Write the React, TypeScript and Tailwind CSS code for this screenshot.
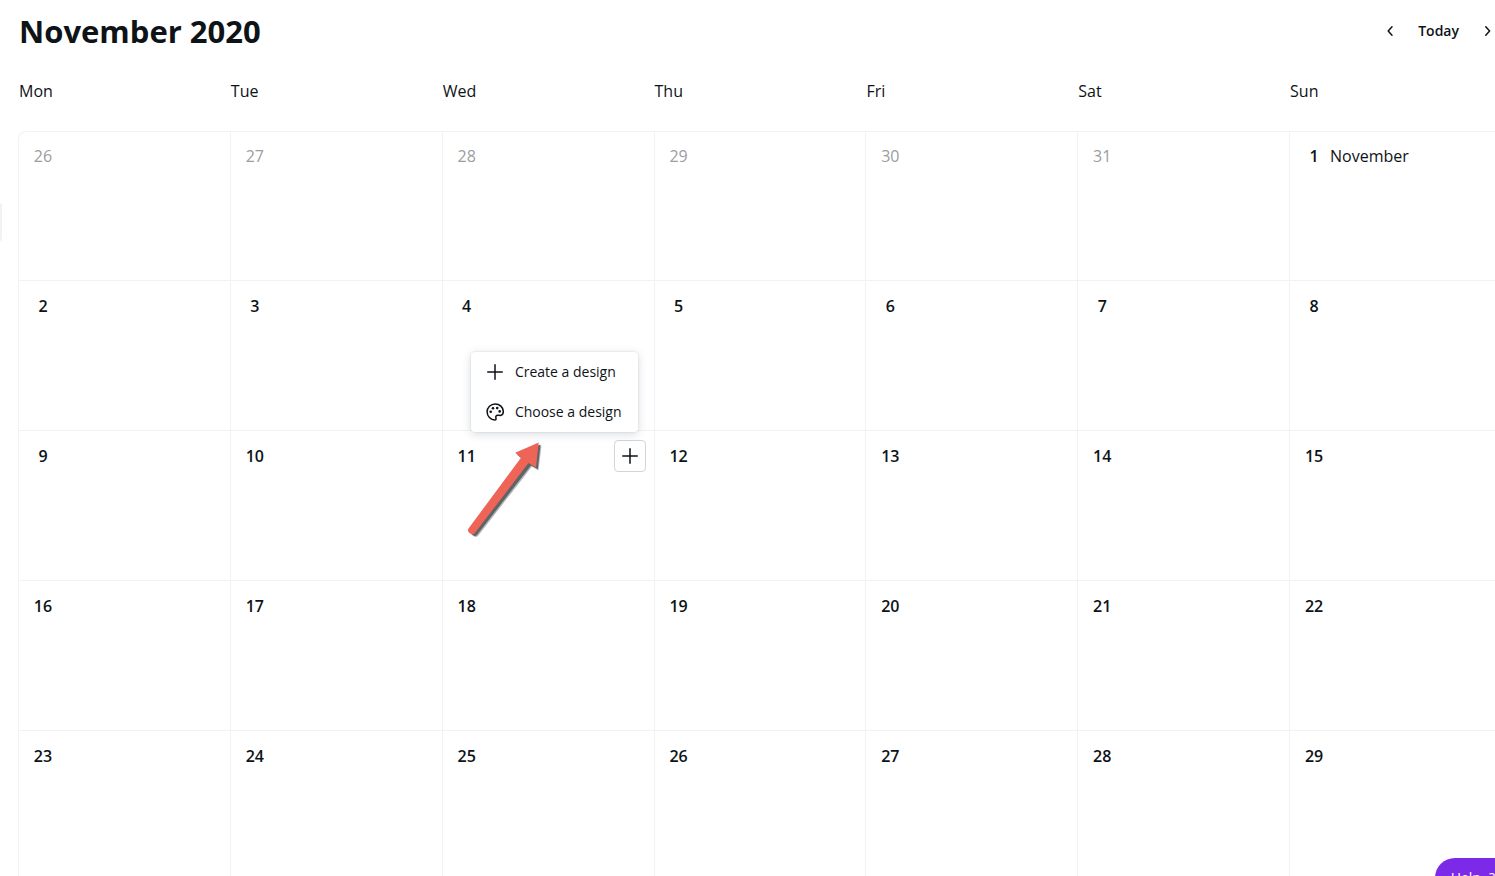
import type { ReactNode } from 'react';

type Day = { day: number; muted?: boolean; month?: string };

const WEEKDAYS = ['Mon', 'Tue', 'Wed', 'Thu', 'Fri', 'Sat', 'Sun'];

const ACTIVE_DAY = 11;

const WEEKS: Day[][] = [
  [
    ...[26, 27, 28, 29, 30, 31].map((day) => ({ day, muted: true })),
    { day: 1, month: 'November' },
  ],
  ...[2, 9, 16, 23].map((start) => WEEKDAYS.map((_, i) => ({ day: start + i }))),
];

function Icon({ children }: { children: ReactNode }) {
  return (
    <svg
      viewBox="0 0 16 16"
      className="size-4"
      fill="none"
      stroke="currentColor"
      strokeWidth="1.5"
      strokeLinecap="round"
      strokeLinejoin="round"
      aria-hidden="true"
    >
      {children}
    </svg>
  );
}

function PlusIcon() {
  return (
    <Icon>
      <path d="M8 .75v14.5M.75 8h14.5" />
    </Icon>
  );
}

function PaletteIcon() {
  return (
    <svg viewBox="0 0 18 18" className="-mx-px size-[18px]" fill="none" aria-hidden="true">
      <path
        d="M9.200 .9C4.700 .9 1.100 4.400 1.100 8.800c0 4.500 3.500 8.100 7.800 8.200 1 0 1.200-.6 1.100-1.400-.2-1.100-.4-1.800 0-2.500.5-.8 1.200-1 2.200-.9 1.100.1 1.900.4 2.900.1 1.500-.4 2.200-1.800 2.200-3.500C17.300 4.300 13.600.9 9.200.9Z"
        stroke="currentColor"
        strokeWidth="1.500"
        strokeLinejoin="round"
      />
      <g fill="currentColor">
        <circle cx="4.700" cy="8.800" r="1.300" />
        <circle cx="7" cy="5.300" r="1.300" />
        <circle cx="11.200" cy="5.100" r="1.300" />
        <circle cx="13.700" cy="8.400" r="1.300" />
      </g>
    </svg>
  );
}

function AddMenu() {
  return (
    <>
      <button
        type="button"
        aria-label="Add to November 11"
        className="absolute top-[9px] right-2 flex size-8 items-center justify-center rounded-sm border border-[#d3d5d7] bg-white"
      >
        <PlusIcon />
      </button>
      <div className="absolute right-4 bottom-[148px] z-10 flex flex-col rounded-sm bg-white text-sm whitespace-nowrap shadow-[0_0_0_1px_rgba(64,87,109,0.05),0_2px_10px_rgba(53,71,90,0.2)]">
        <button type="button" className="flex h-10 items-center gap-3 px-4">
          <PlusIcon />
          Create a design
        </button>
        <button type="button" className="flex h-10 items-center gap-3 px-4">
          <PaletteIcon />
          Choose a design
        </button>
      </div>
      <svg
        viewBox="460 435 90 110"
        className="absolute top-1 left-[17px] z-20 h-[110px] w-[90px]"
        aria-hidden="true"
      >
        <path
          d="M541.500 445.500 518 455.500 524.500 460.500 471 530Q470 533 472.500 535.500Q475 538 478 536L532 466.500 538.500 470.500Z"
          fill="#b5b8ba"
        />
        <path
          d="M540.500 444.500 517 454.500 523 459.500 470.500 529Q469.500 532 472 534.500Q474.500 537 476.800 535.200L531 465.500 537.800 469.300Z"
          fill="#5f6467"
        />
        <path
          d="M538.700 442.500 515.200 452.800 521 457.800 468.500 528.500Q467 531 469.500 533Q472.500 535.500 474.500 533.500L528.500 463 536 467.500Z"
          fill="#ee6558"
        />
      </svg>
    </>
  );
}

function DayCell({ day, muted, month }: Day) {
  return (
    <td className="relative h-[150px] border-b border-l border-[#f1f2f3] p-0 align-top">
      <div className="flex h-[50px] items-center gap-1 pl-3">
        <span className={muted ? 'w-6 text-center text-[#9b9da0]' : 'w-6 text-center font-semibold'}>
          {day}
        </span>
        {month && <span>{month}</span>}
      </div>
      {day === ACTIVE_DAY && <AddMenu />}
    </td>
  );
}

export default function App() {
  return (
    <main className="relative h-screen overflow-hidden bg-white font-['Open_Sans','Noto_Sans',sans-serif] text-base text-[#0e1318]">
      <button
        type="button"
        aria-label="Open side panel"
        className="absolute top-[203px] left-0 h-[38px] w-0.5 rounded-r-sm bg-[#f1f2f3]"
      />

      <header className="flex items-center justify-between pt-[11px] pl-[19px]">
        <h1 className="text-[31px] leading-10 font-bold">November 2020</h1>
        <nav aria-label="Month" className="flex items-center gap-5 text-sm font-semibold">
          <button type="button" aria-label="Previous month">
            <Icon>
              <path d="M10 3.800 6.200 8l3.800 4.200" />
            </Icon>
          </button>
          <button type="button">Today</button>
          <button type="button" aria-label="Next month">
            <Icon>
              <path d="M6.800 3.800 10.600 8l-3.800 4.200" />
            </Icon>
          </button>
        </nav>
      </header>

      <div className="-mr-1.5 pl-[18px]">
        <table className="w-full table-fixed border-separate border-spacing-0">
          <thead>
            <tr>
              {WEEKDAYS.map((name) => (
                <th
                  key={name}
                  scope="col"
                  className="h-20 p-0 pl-px text-left align-middle font-normal"
                >
                  {name}
                </th>
              ))}
            </tr>
          </thead>
          <tbody className="[&>tr:first-child>td]:shadow-[inset_0_1px_#f1f2f3] [&>tr:first-child>td:first-child]:rounded-tl-lg">
            {WEEKS.map((week) => (
              <tr key={week[0].day + (week[0].muted ? '-previous' : '')}>
                {week.map((d) => (
                  <DayCell key={d.day} {...d} />
                ))}
              </tr>
            ))}
          </tbody>
        </table>
      </div>

      <button
        type="button"
        className="fixed -right-8 -bottom-[22px] flex h-10 items-center gap-2 rounded-full bg-[#7d2ae8] pr-8 pl-4 text-sm text-white"
      >
        <span>Help</span>
        <span>?</span>
      </button>
    </main>
  );
}
